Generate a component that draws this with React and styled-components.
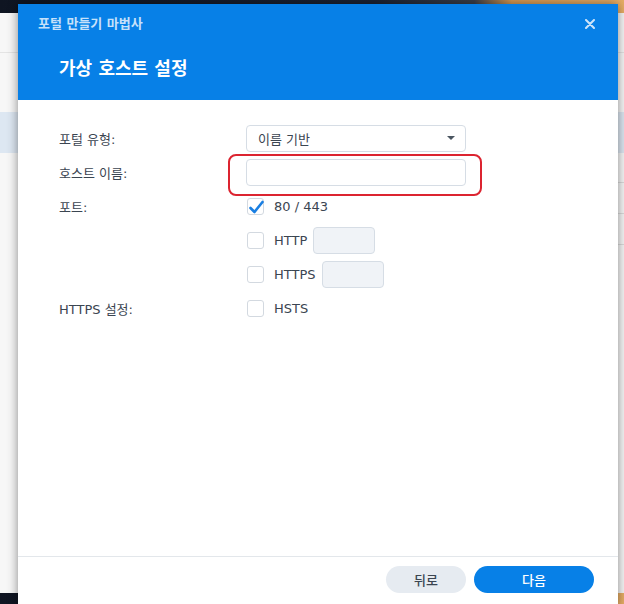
import React from "react";
import styled, { createGlobalStyle } from "styled-components";

const Global = createGlobalStyle`
  html, body { margin: 0; padding: 0; }
  body { font-family: "DejaVu Sans", "Noto Sans CJK KR", sans-serif; }
  * { box-sizing: border-box; }
`;

const Desktop = styled.div`
  position: relative;
  width: 624px;
  height: 604px;
  overflow: hidden;
  background: linear-gradient(90deg, #0f1522 0%, #1b2334 60%, #3a3f4a 76%, #d99a52 82%, #e8ae66 100%);
`;

const BackWindow = styled.div`
  position: absolute;
  left: 0;
  top: 13px;
  width: 624px;
  height: 580px;
  background: #f7f7f7;
  display: flex;
  flex-direction: column;
`;

const BackToolbar = styled.div`
  height: 40px;
  border-bottom: 1px solid #e4e4e4;
`;

const BackRow = styled.div`
  height: ${(p) => p.$h}px;
  margin-left: ${(p) => (p.$line ? 300 : 0)}px;
  background: ${(p) => (p.$active ? "#dde7f2" : "transparent")};
  border-bottom: 1px solid ${(p) => (p.$line ? "#dcdcdc" : "transparent")};
`;

const Dialog = styled.div`
  position: absolute;
  left: 18px;
  top: 4px;
  width: 600px;
  height: 604px;
  background: #fff;
  display: flex;
  flex-direction: column;
  box-shadow: 0 0 10px rgba(0, 0, 0, 0.45);
`;

const Header = styled.div`
  height: 96px;
  background: #0780e7;
  position: relative;
  padding: 12px 20px 0 20px;
  display: flex;
  flex-direction: column;
`;

const WizardTitle = styled.div`
  font-size: 13px;
  font-weight: bold;
  color: #c6e1fa;
  line-height: 15px;
`;

const StepTitle = styled.div`
  margin-top: 27px;
  margin-left: 21px;
  font-size: 18px;
  font-weight: bold;
  color: #ffffff;
  line-height: 22px;
`;

const CloseButton = styled.button`
  position: absolute;
  right: 20px;
  top: 12px;
  width: 16px;
  height: 16px;
  border: 0;
  padding: 0;
  background: transparent;
  display: flex;
  align-items: center;
  justify-content: center;
  cursor: pointer;
`;

const Body = styled.div`
  flex: 1;
  padding: 21px 0 0 41px;
  display: flex;
  flex-direction: column;
`;

const Row = styled.div`
  height: 34px;
  display: grid;
  grid-template-columns: 187px 1fr;
  align-items: center;
`;

const Label = styled.div`
  font-size: 13px;
  color: #3b4551;
`;

const Control = styled.div`
  display: flex;
  align-items: center;
  position: relative;
`;

const Select = styled.div`
  width: 220px;
  height: 27px;
  border: 1px solid #d6dde5;
  border-radius: 4px;
  display: flex;
  align-items: center;
  justify-content: space-between;
  padding: 0 10px 0 11px;
  font-size: 13px;
  color: #3b4551;
`;

const Caret = styled.span`
  width: 0;
  height: 0;
  border-left: 4px solid transparent;
  border-right: 4px solid transparent;
  border-top: 4px solid #4a5560;
`;

const TextInput = styled.div`
  width: ${(p) => p.$w}px;
  height: 27px;
  border: 1px solid #d6dde5;
  border-radius: 4px;
  background: ${(p) => (p.$disabled ? "#f0f3f7" : "#fff")};
  margin-left: ${(p) => p.$ml || 0}px;
`;

const Highlight = styled.div`
  position: absolute;
  left: -18px;
  top: -5px;
  width: 254px;
  height: 42px;
  border: 2px solid #dc2430;
  border-radius: 8px;
  pointer-events: none;
`;

const Box = styled.span`
  width: 17px;
  height: 17px;
  margin-left: 1px;
  border: 1px solid #d3d9e0;
  border-radius: 3px;
  background: #fff;
  position: relative;
  flex: none;
`;

const CheckMark = styled.svg`
  position: absolute;
  left: 0;
  top: 0;
  overflow: visible;
`;

const CheckText = styled.span`
  margin-left: 10px;
  font-size: 13px;
  color: #3b4551;
`;

const Footer = styled.div`
  height: 52px;
  border-top: 1px solid #e3e7eb;
  display: flex;
  justify-content: flex-end;
  align-items: flex-start;
  gap: 8px;
  padding: 9px 24px 0 0;
`;

const Button = styled.button`
  height: 27px;
  width: ${(p) => p.$w}px;
  border: 0;
  border-radius: 14px;
  font-family: "DejaVu Sans", "Noto Sans CJK KR", sans-serif;
  font-size: 13px;
  font-weight: 500;
  background: ${(p) => (p.$primary ? "#0780e7" : "#e6ebf1")};
  color: ${(p) => (p.$primary ? "#ffffff" : "#3b4551")};
  cursor: pointer;
`;

function Checkbox({ checked, label, children }) {
  return (
    <Control>
      <Box>
        {checked && (
          <CheckMark width="17" height="17" viewBox="0 0 17 17">
            <polyline
              points="2.5,9 6.5,13 14.5,3"
              fill="none"
              stroke="#1a7fe2"
              strokeWidth="2.6"
              strokeLinecap="round"
              strokeLinejoin="round"
            />
          </CheckMark>
        )}
      </Box>
      <CheckText>{label}</CheckText>
      {children}
    </Control>
  );
}

export default function App() {
  return (
    <>
      <Global />
      <Desktop>
        <BackWindow>
          <BackToolbar />
          <BackRow $h={59} />
          <BackRow $h={41} $active />
          <BackRow $h={30} $line />
          <BackRow $h={31} $line />
          <BackRow $h={31} $line />
        </BackWindow>
        <Dialog>
          <Header>
            <WizardTitle>포털 만들기 마법사</WizardTitle>
            <StepTitle>가상 호스트 설정</StepTitle>
            <CloseButton aria-label="닫기">
              <svg width="10" height="10" viewBox="0 0 10 10">
                <path d="M1 1L9 9M9 1L1 9" stroke="#cde4fa" strokeWidth="2" strokeLinecap="round" />
              </svg>
            </CloseButton>
          </Header>
          <Body>
            <Row>
              <Label>포털 유형:</Label>
              <Control>
                <Select>
                  <span>이름 기반</span>
                  <Caret />
                </Select>
              </Control>
            </Row>
            <Row>
              <Label>호스트 이름:</Label>
              <Control>
                <TextInput $w={220} />
                <Highlight />
              </Control>
            </Row>
            <Row>
              <Label>포트:</Label>
              <Checkbox checked label="80 / 443" />
            </Row>
            <Row>
              <Label />
              <Checkbox label="HTTP">
                <TextInput $w={62} $ml={6} $disabled />
              </Checkbox>
            </Row>
            <Row>
              <Label />
              <Checkbox label="HTTPS">
                <TextInput $w={62} $ml={6} $disabled />
              </Checkbox>
            </Row>
            <Row>
              <Label>HTTPS 설정:</Label>
              <Checkbox label="HSTS" />
            </Row>
          </Body>
          <Footer>
            <Button $w={80}>뒤로</Button>
            <Button $w={120} $primary>다음</Button>
          </Footer>
        </Dialog>
      </Desktop>
    </>
  );
}
